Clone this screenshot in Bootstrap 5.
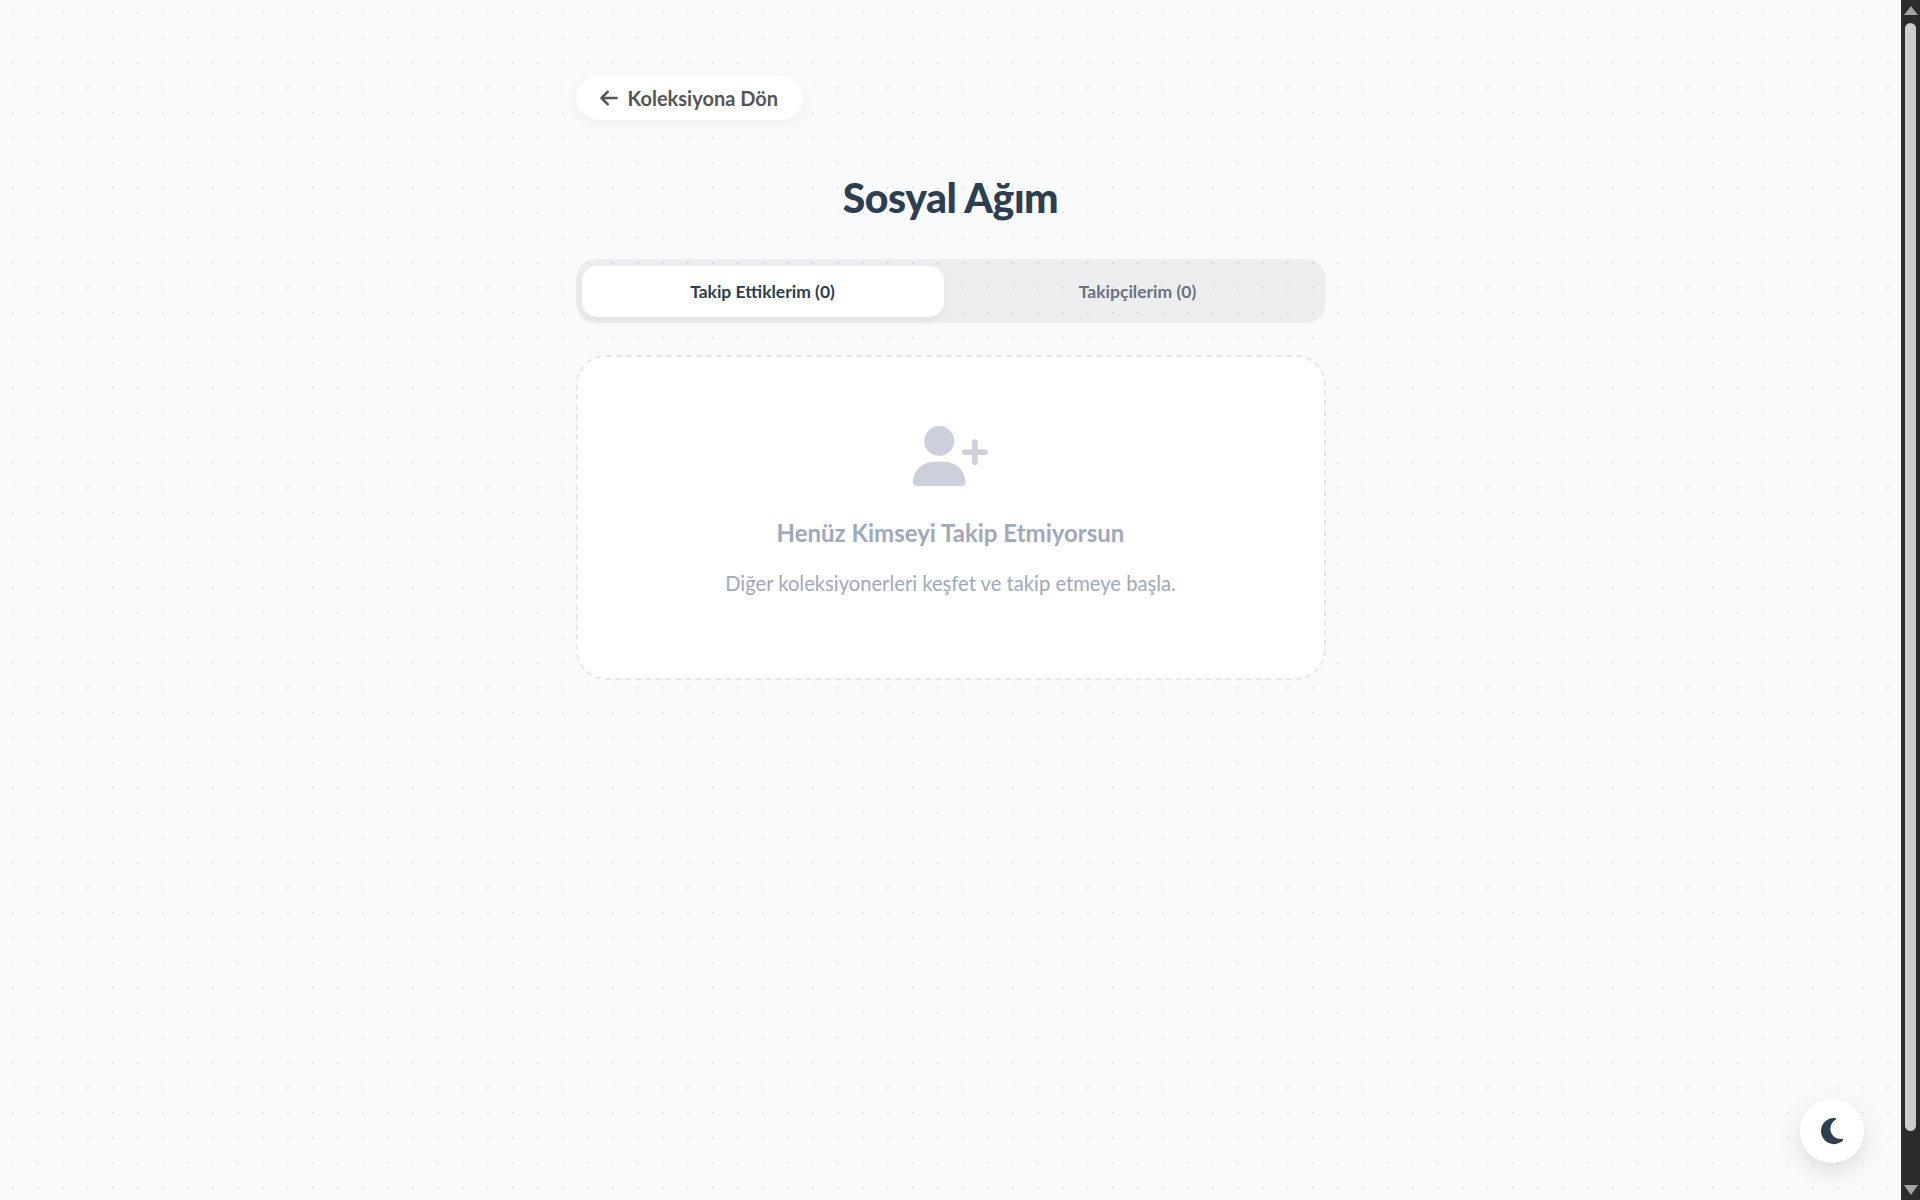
<!DOCTYPE html>
<html lang="tr">
<head>
    <meta charset="UTF-8">
    <meta name="viewport" content="width=device-width, initial-scale=1.0">
    <title>Sosyal Ağım</title>
    <link href="https://cdn.jsdelivr.net/npm/bootstrap@5.3.0/dist/css/bootstrap.min.css" rel="stylesheet">
    <style>
        body {
            min-height: 1200px;
            padding-right: 19px;
            background-color: #f8fafc;
            background-image: radial-gradient(#dde1e7 1px, transparent 1px);
            background-size: 25px 25px;
            font-family: "Lato", "Liberation Sans", sans-serif;
            color: #2c3e50;
        }
        .page-wrap { width: 750px; padding-top: 76px; }
        .back-link { height: 44px; padding: 0 25px 0 24px; font-size: 20px; font-weight: 700; color: #555; box-shadow: 0 4px 15px rgba(0,0,0,.05); gap: 10px; }
        .back-link svg { width: 18px; height: 20px; fill: #555; }
        .page-title { font-size: 41px; font-weight: 900; color: #2c3e50; line-height: 1.2; margin: 53px 0 37px; letter-spacing: -.5px; }
        .tab-strip { height: 64px; padding: 7px 0 6px 6px; background: rgba(0,0,0,.05); border-radius: 20px; }
        .tab-strip .nav-link { height: 51px; font-size: 17.5px; font-weight: 700; color: #6b7280; border-radius: 15px; padding: 0; }
        .tab-strip .nav-link.active { background: #fff; color: #2c3e50; box-shadow: 0 4px 10px rgba(0,0,0,.05); }
        .tab-first { width: 362px; margin-right: 6px; }
        .empty-box { height: 325px; margin-top: 32px; background: #fff; border: 2px dashed #e6e8ec; border-radius: 30px; padding-top: 69px; }
        .empty-icon { width: 75px; height: 60px; fill: #cbd0db; }
        .empty-title { font-size: 24px; font-weight: 700; color: #a0a8bc; margin: 30px 0 0; line-height: 34px; }
        .empty-text { font-size: 20.2px; color: #a0a8bc; margin: 18px 0 0; line-height: 30px; }
        .theme-btn { position: fixed; right: 56px; bottom: 37px; width: 64px; height: 64px; box-shadow: 0 8px 25px rgba(0,0,0,.12); }
        .theme-btn svg { width: 22.5px; height: 30px; fill: #2c3e50; }
        /* the dark window scrollbar, headless chrome hides the real one */
        .fake-scroll { position: fixed; top: 0; right: 0; bottom: 0; width: 19px; background: #2b2b2b; padding: 6px 2px 5px 3px; }
        .fake-scroll i { display: block; width: 0; border-left: 7px solid transparent; border-right: 7px solid transparent; }
        .arrow-up { border-bottom: 9px solid #a3a3a3; }
        .arrow-down { border-top: 10px solid #a3a3a3; }
        .scroll-thumb { width: 11px; height: 1108px; margin: 8px 0 54px 1px; background: #cdcdcd; border-radius: 6px; }
    </style>
</head>
<body>
    <div class="page-wrap mx-auto">
        <a href="#" class="back-link btn btn-light bg-white border-0 rounded-pill d-inline-flex align-items-center">
            <svg viewBox="0 0 448 512"><path d="M9.4 233.4c-12.5 12.5-12.5 32.8 0 45.3l160 160c12.5 12.5 32.8 12.5 45.3 0s12.5-32.8 0-45.3L109.2 288 416 288c17.7 0 32-14.3 32-32s-14.3-32-32-32l-306.7 0L214.6 118.6c12.5-12.5 12.5-32.8 0-45.3s-32.8-12.5-45.3 0l-160 160z"/></svg>
            Koleksiyona Dön
        </a>

        <h1 class="page-title text-center">Sosyal Ağım</h1>

        <ul class="nav nav-pills tab-strip flex-nowrap">
            <li class="nav-item tab-first"><a class="nav-link active d-flex align-items-center justify-content-center" href="#">Takip Ettiklerim (0)</a></li>
            <li class="nav-item flex-grow-1"><a class="nav-link d-flex align-items-center justify-content-center" href="#">Takipçilerim (0)</a></li>
        </ul>

        <div class="card empty-box text-center align-items-center">
            <svg class="empty-icon" viewBox="0 0 640 512"><path d="M96 128a128 128 0 1 1 256 0A128 128 0 1 1 96 128zM0 482.3C0 383.8 79.8 304 178.3 304h91.4C368.2 304 448 383.8 448 482.3c0 16.4-13.3 29.7-29.7 29.7H29.7C13.3 512 0 498.7 0 482.3zM504 312V248H440c-13.3 0-24-10.7-24-24s10.7-24 24-24h64V136c0-13.3 10.7-24 24-24s24 10.7 24 24v64h64c13.3 0 24 10.7 24 24s-10.7 24-24 24H552v64c0 13.3-10.7 24-24 24s-24-10.7-24-24z"/></svg>
            <h3 class="empty-title">Henüz Kimseyi Takip Etmiyorsun</h3>
            <p class="empty-text">Diğer koleksiyonerleri keşfet ve takip etmeye başla.</p>
        </div>
    </div>

    <button type="button" class="theme-btn btn btn-light bg-white border-0 rounded-circle d-flex align-items-center justify-content-center p-0">
        <svg viewBox="0 0 384 512"><path d="M223.5 32C100 32 0 132.3 0 256S100 480 223.5 480c60.6 0 115.5-24.2 155.8-63.4c5-4.9 6.3-12.5 3.2-18.7s-10.1-9.7-17-8.5c-9.8 1.7-19.8 2.6-30.1 2.6c-96.9 0-175.5-78.8-175.5-176c0-65.8 36-123.1 89.3-153.3c6.1-3.5 9.2-10.5 7.7-17.3s-7.3-11.9-14.3-12.5c-6.3-.5-12.6-.8-19-.8z"/></svg>
    </button>

    <div class="fake-scroll">
        <i class="arrow-up"></i>
        <div class="scroll-thumb"></div>
        <i class="arrow-down"></i>
    </div>

    <script src="https://cdn.jsdelivr.net/npm/bootstrap@5.3.0/dist/js/bootstrap.bundle.min.js"></script>
</body>
</html>
